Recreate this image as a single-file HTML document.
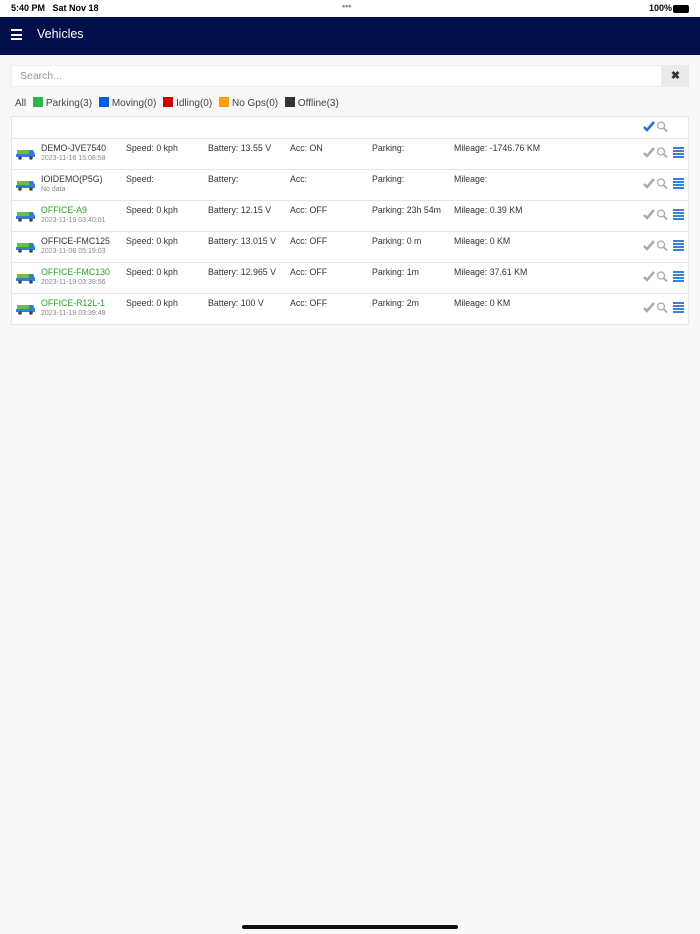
<!DOCTYPE html><html><head><style>
body{margin:0;width:700px;height:934px;background:#f8f8f8;font-family:"Liberation Sans",sans-serif;position:relative;overflow:hidden}
.sb{height:17px;background:#fff;font-size:9px;font-weight:bold;color:#000;position:relative}
.hd{position:absolute;top:17px;left:0;width:700px;height:38px;background:#020f4a;color:#fff}
.srch{position:absolute;top:65px;left:11px;width:651px;height:22px;background:#fff;border:1px solid #eee;font-size:10.5px;color:#999;line-height:21px;padding-left:8px;box-sizing:border-box}
.x{position:absolute;top:65px;left:662px;width:27px;height:22px;background:#eaeaea;text-align:center;line-height:22px;font-size:11px;font-weight:bold;color:#333}
.leg{position:absolute;top:97px;left:15px;font-size:10px;color:#444;white-space:nowrap}
.leg span.b{display:inline-block;width:10px;height:10px;vertical-align:-1px;margin:0 3px 0 4px}
.tbl{position:absolute;top:116px;left:11px;width:678px;background:#fff;border:1px solid #e5e5e5;box-sizing:border-box}
.r{position:relative;height:30px;border-top:1px solid #e5e5e5;font-size:8.8px;color:#333}
.r0{height:21px;border-top:none}
.c{position:absolute;top:4px;white-space:nowrap}
.d{position:absolute;top:16px;left:29px;font-size:7px;color:#888}
.g{color:#2a9d2a}
.ic{position:absolute;left:631px;top:7px;width:45px;height:14px}
.tk{position:absolute;left:4px;top:9px}
</style></head><body>
<div class="sb"><span style="position:absolute;left:11px;top:3px">5:40 PM&nbsp;&nbsp; Sat Nov 18</span><span style="position:absolute;left:342px;top:1px;color:#888">•••</span><span style="position:absolute;right:28px;top:3px">100%</span><span style="position:absolute;right:11px;top:5px;width:14px;height:6px;border:1px solid #000;border-radius:2px;background:#000"></span></div>
<div class="hd"><div style="position:absolute;left:11px;top:12px;width:11px"><div style="height:2px;background:#fff;margin-bottom:2.5px"></div><div style="height:2px;background:#fff;margin-bottom:2.5px"></div><div style="height:2px;background:#fff"></div></div><div style="position:absolute;left:37px;top:10px;font-size:12.5px">Vehicles</div></div>
<div class="srch">Search...</div><div class="x">✖</div>
<div class="leg">All <span class="b" style="background:#2db34a"></span>Parking(3) <span class="b" style="background:#0a5ee0"></span>Moving(0) <span class="b" style="background:#d60000"></span>Idling(0) <span class="b" style="background:#f7a000"></span>No Gps(0) <span class="b" style="background:#333"></span>Offline(3)</div>
<div class="tbl">
<div class="r r0"><svg class="ic" style="top:3px" viewBox="0 0 45 14"><path d="M1 7l3 3 7-8" stroke="#1e6fd6" stroke-width="2.5" fill="none"/><circle cx="18" cy="5.5" r="3.5" stroke="#aaa" stroke-width="1.3" fill="none"/><path d="M20.5 8l3.5 3.5" stroke="#aaa" stroke-width="1.8"/></svg></div>
<div class="r"><svg class="tk" width="20" height="12"><rect x="1" y="2" width="12" height="5" fill="#6cbf3c"/><rect x="0" y="6" width="19" height="3" fill="#2f7fd6"/><path d="M13 2h4l2 4h-6z" fill="#2f7fd6"/><circle cx="4" cy="10" r="1.8" fill="#444"/><circle cx="15" cy="10" r="1.8" fill="#444"/></svg><span class="c" style="left:29px">DEMO-JVE7540</span><span class="d">2023-11-16 15:08:58</span><span class="c" style="left:114px">Speed: 0 kph</span><span class="c" style="left:196px">Battery: 13.55 V</span><span class="c" style="left:278px">Acc: ON</span><span class="c" style="left:360px">Parking:</span><span class="c" style="left:442px">Mileage: -1746.76 KM</span><svg class="ic" viewBox="0 0 45 14"><path d="M1 7l3 3 7-8" stroke="#aaa" stroke-width="2.5" fill="none"/><circle cx="18" cy="5.5" r="3.5" stroke="#aaa" stroke-width="1.3" fill="none"/><path d="M20.5 8l3.5 3.5" stroke="#aaa" stroke-width="1.8"/><path d="M30 2h11M30 5h11M30 8h11M30 11h11" stroke="#1e6fd6" stroke-width="1.8"/></svg></div>
<div class="r"><svg class="tk" width="20" height="12"><rect x="1" y="2" width="12" height="5" fill="#6cbf3c"/><rect x="0" y="6" width="19" height="3" fill="#2f7fd6"/><path d="M13 2h4l2 4h-6z" fill="#2f7fd6"/><circle cx="4" cy="10" r="1.8" fill="#444"/><circle cx="15" cy="10" r="1.8" fill="#444"/></svg><span class="c" style="left:29px">IOIDEMO(P5G)</span><span class="d">No data</span><span class="c" style="left:114px">Speed:</span><span class="c" style="left:196px">Battery:</span><span class="c" style="left:278px">Acc:</span><span class="c" style="left:360px">Parking:</span><span class="c" style="left:442px">Mileage:</span><svg class="ic" viewBox="0 0 45 14"><path d="M1 7l3 3 7-8" stroke="#aaa" stroke-width="2.5" fill="none"/><circle cx="18" cy="5.5" r="3.5" stroke="#aaa" stroke-width="1.3" fill="none"/><path d="M20.5 8l3.5 3.5" stroke="#aaa" stroke-width="1.8"/><path d="M30 2h11M30 5h11M30 8h11M30 11h11" stroke="#1e6fd6" stroke-width="1.8"/></svg></div>
<div class="r"><svg class="tk" width="20" height="12"><rect x="1" y="2" width="12" height="5" fill="#6cbf3c"/><rect x="0" y="6" width="19" height="3" fill="#2f7fd6"/><path d="M13 2h4l2 4h-6z" fill="#2f7fd6"/><circle cx="4" cy="10" r="1.8" fill="#444"/><circle cx="15" cy="10" r="1.8" fill="#444"/></svg><span class="c g" style="left:29px">OFFICE-A9</span><span class="d">2023-11-19 03:40:01</span><span class="c" style="left:114px">Speed: 0 kph</span><span class="c" style="left:196px">Battery: 12.15 V</span><span class="c" style="left:278px">Acc: OFF</span><span class="c" style="left:360px">Parking: 23h 54m</span><span class="c" style="left:442px">Mileage: 0.39 KM</span><svg class="ic" viewBox="0 0 45 14"><path d="M1 7l3 3 7-8" stroke="#aaa" stroke-width="2.5" fill="none"/><circle cx="18" cy="5.5" r="3.5" stroke="#aaa" stroke-width="1.3" fill="none"/><path d="M20.5 8l3.5 3.5" stroke="#aaa" stroke-width="1.8"/><path d="M30 2h11M30 5h11M30 8h11M30 11h11" stroke="#1e6fd6" stroke-width="1.8"/></svg></div>
<div class="r"><svg class="tk" width="20" height="12"><rect x="1" y="2" width="12" height="5" fill="#6cbf3c"/><rect x="0" y="6" width="19" height="3" fill="#2f7fd6"/><path d="M13 2h4l2 4h-6z" fill="#2f7fd6"/><circle cx="4" cy="10" r="1.8" fill="#444"/><circle cx="15" cy="10" r="1.8" fill="#444"/></svg><span class="c" style="left:29px">OFFICE-FMC125</span><span class="d">2023-11-08 05:19:03</span><span class="c" style="left:114px">Speed: 0 kph</span><span class="c" style="left:196px">Battery: 13.015 V</span><span class="c" style="left:278px">Acc: OFF</span><span class="c" style="left:360px">Parking: 0 m</span><span class="c" style="left:442px">Mileage: 0 KM</span><svg class="ic" viewBox="0 0 45 14"><path d="M1 7l3 3 7-8" stroke="#aaa" stroke-width="2.5" fill="none"/><circle cx="18" cy="5.5" r="3.5" stroke="#aaa" stroke-width="1.3" fill="none"/><path d="M20.5 8l3.5 3.5" stroke="#aaa" stroke-width="1.8"/><path d="M30 2h11M30 5h11M30 8h11M30 11h11" stroke="#1e6fd6" stroke-width="1.8"/></svg></div>
<div class="r"><svg class="tk" width="20" height="12"><rect x="1" y="2" width="12" height="5" fill="#6cbf3c"/><rect x="0" y="6" width="19" height="3" fill="#2f7fd6"/><path d="M13 2h4l2 4h-6z" fill="#2f7fd6"/><circle cx="4" cy="10" r="1.8" fill="#444"/><circle cx="15" cy="10" r="1.8" fill="#444"/></svg><span class="c g" style="left:29px">OFFICE-FMC130</span><span class="d">2023-11-19 03:39:56</span><span class="c" style="left:114px">Speed: 0 kph</span><span class="c" style="left:196px">Battery: 12.965 V</span><span class="c" style="left:278px">Acc: OFF</span><span class="c" style="left:360px">Parking: 1m</span><span class="c" style="left:442px">Mileage: 37.61 KM</span><svg class="ic" viewBox="0 0 45 14"><path d="M1 7l3 3 7-8" stroke="#aaa" stroke-width="2.5" fill="none"/><circle cx="18" cy="5.5" r="3.5" stroke="#aaa" stroke-width="1.3" fill="none"/><path d="M20.5 8l3.5 3.5" stroke="#aaa" stroke-width="1.8"/><path d="M30 2h11M30 5h11M30 8h11M30 11h11" stroke="#1e6fd6" stroke-width="1.8"/></svg></div>
<div class="r"><svg class="tk" width="20" height="12"><rect x="1" y="2" width="12" height="5" fill="#6cbf3c"/><rect x="0" y="6" width="19" height="3" fill="#2f7fd6"/><path d="M13 2h4l2 4h-6z" fill="#2f7fd6"/><circle cx="4" cy="10" r="1.8" fill="#444"/><circle cx="15" cy="10" r="1.8" fill="#444"/></svg><span class="c g" style="left:29px">OFFICE-R12L-1</span><span class="d">2023-11-19 03:39:48</span><span class="c" style="left:114px">Speed: 0 kph</span><span class="c" style="left:196px">Battery: 100 V</span><span class="c" style="left:278px">Acc: OFF</span><span class="c" style="left:360px">Parking: 2m</span><span class="c" style="left:442px">Mileage: 0 KM</span><svg class="ic" viewBox="0 0 45 14"><path d="M1 7l3 3 7-8" stroke="#aaa" stroke-width="2.5" fill="none"/><circle cx="18" cy="5.5" r="3.5" stroke="#aaa" stroke-width="1.3" fill="none"/><path d="M20.5 8l3.5 3.5" stroke="#aaa" stroke-width="1.8"/><path d="M30 2h11M30 5h11M30 8h11M30 11h11" stroke="#1e6fd6" stroke-width="1.8"/></svg></div>
</div>
<div style="position:absolute;left:242px;top:925px;width:216px;height:4px;border-radius:2px;background:#111"></div>
</body></html>
